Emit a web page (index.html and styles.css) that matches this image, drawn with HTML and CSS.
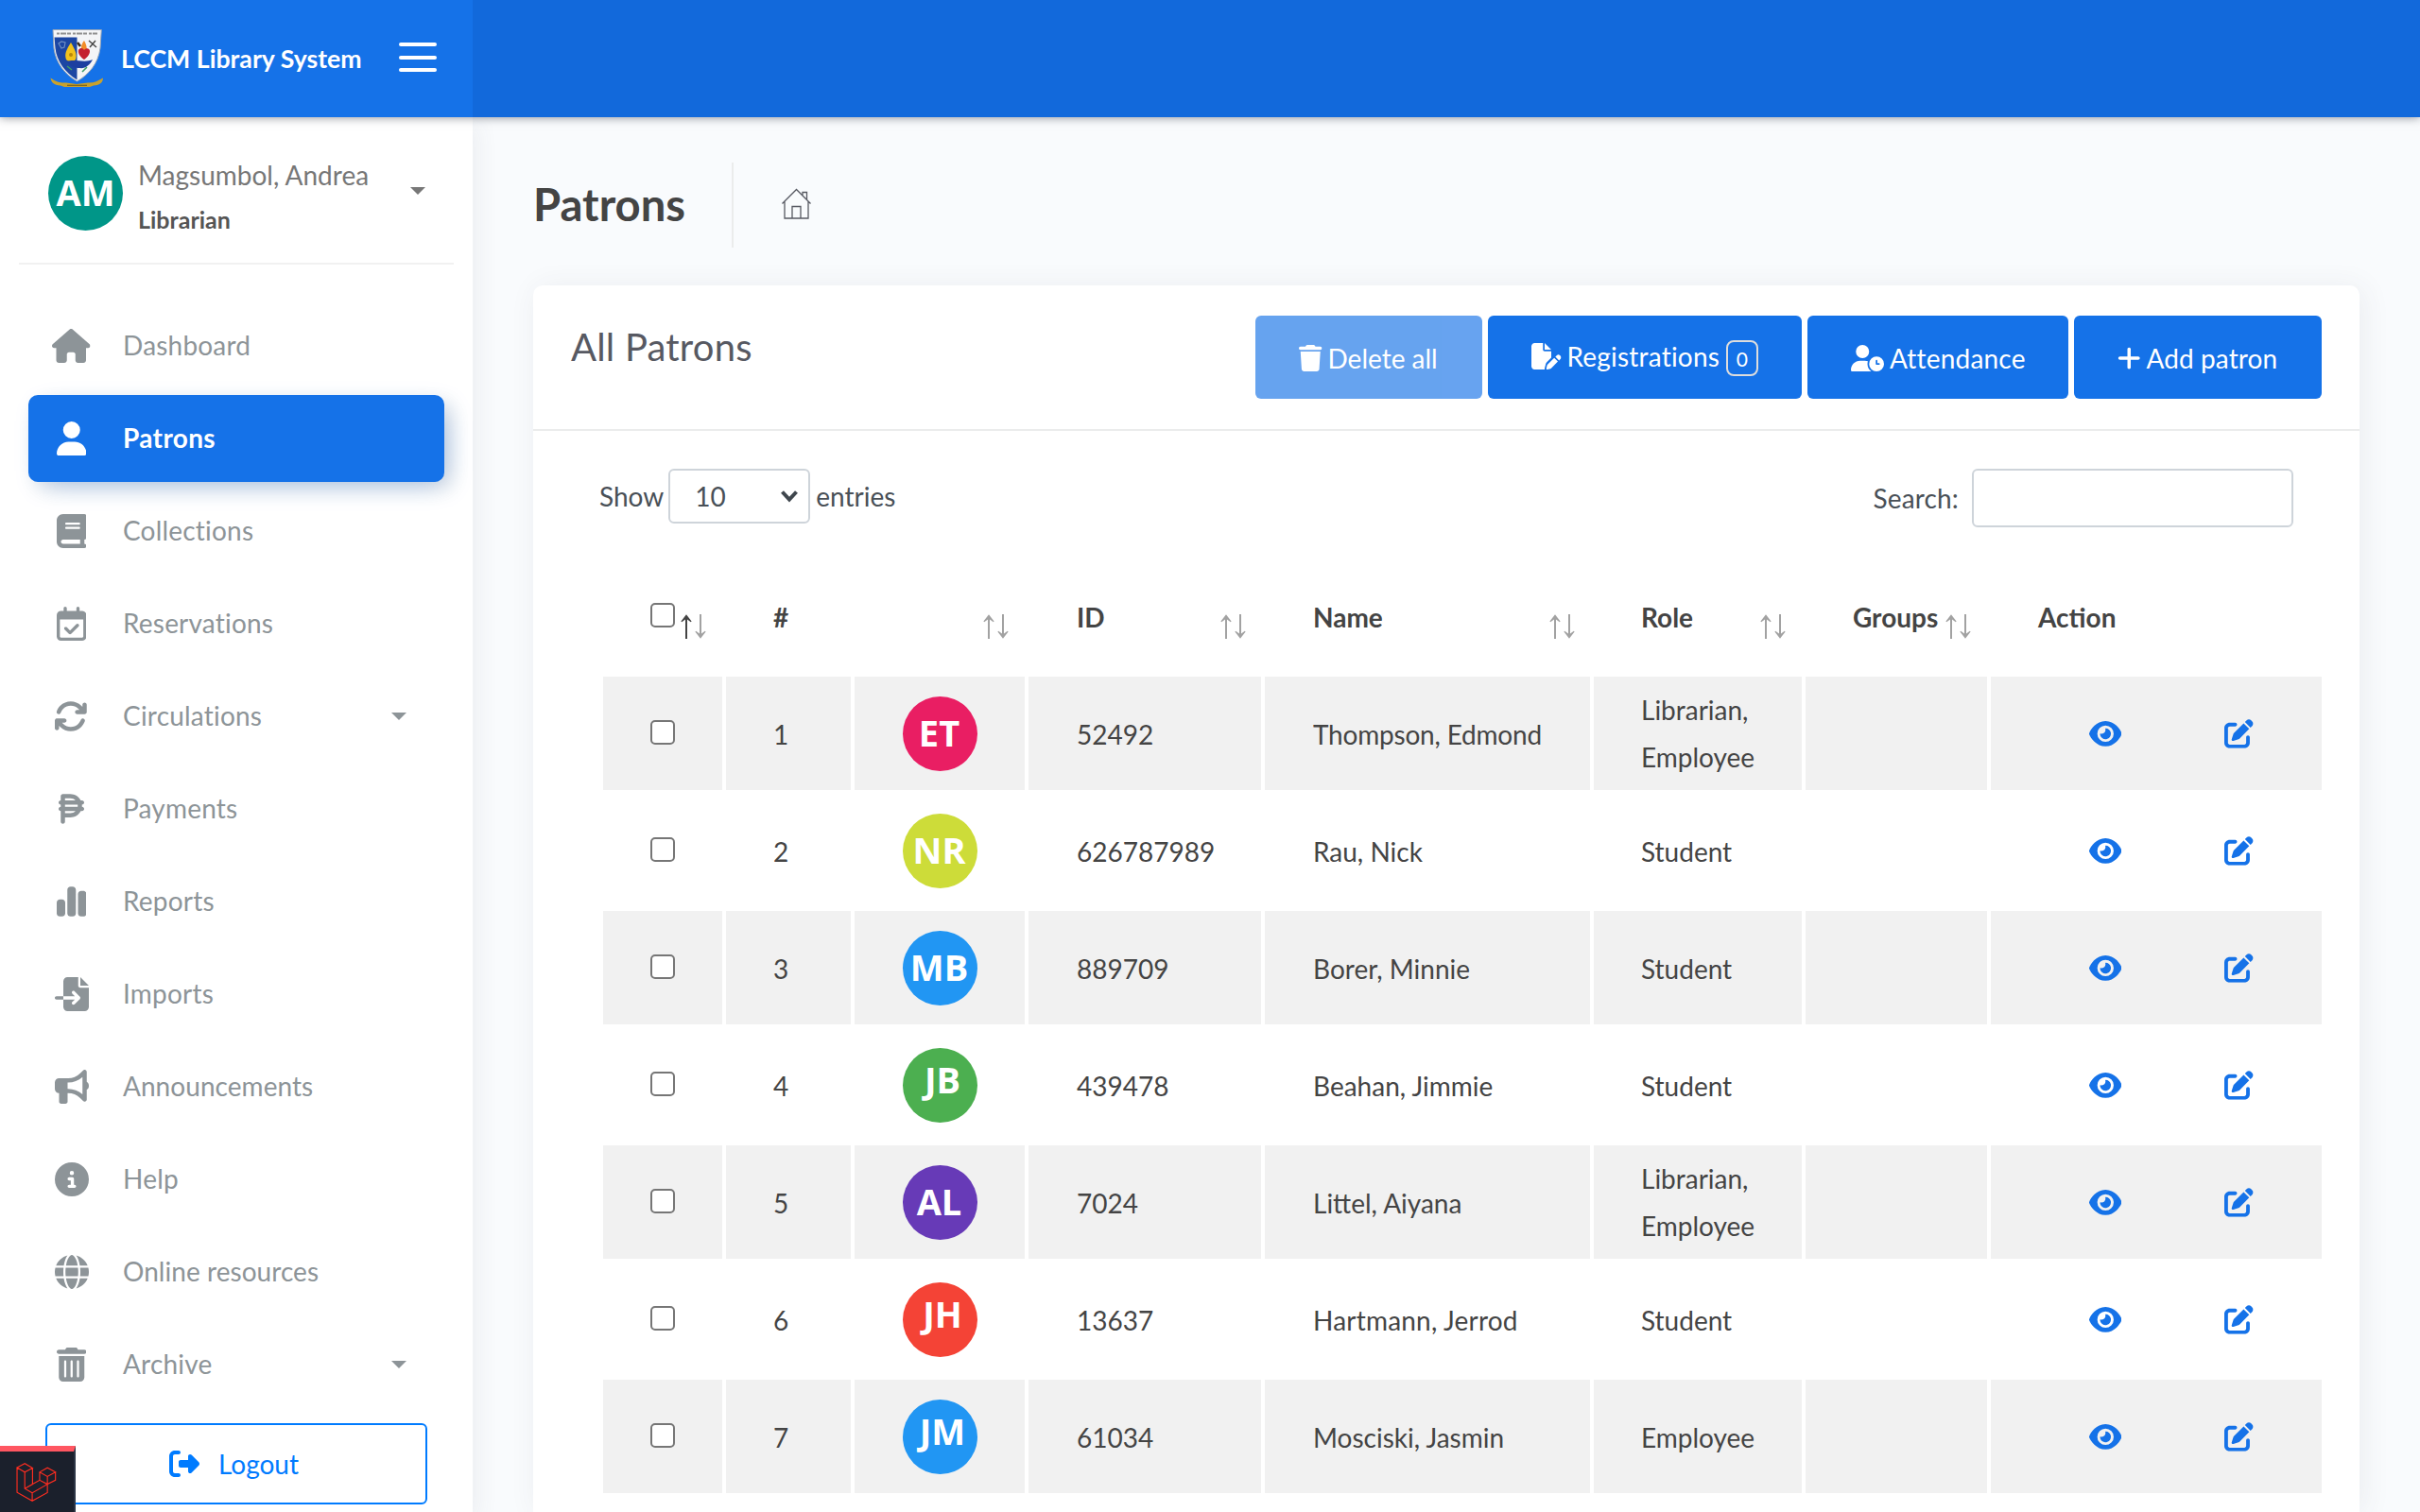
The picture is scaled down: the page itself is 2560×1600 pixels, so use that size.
FILE: index.html
```html
<!DOCTYPE html>
<html lang="en">
<head>
<meta charset="utf-8">
<title>Patrons - LCCM Library System</title>
<link rel="stylesheet" href="styles.css">
</head>
<body>
<svg class="sprite" aria-hidden="true">
  <symbol id="house" viewBox="0 0 576 512"><path d="M575.8 255.5c0 18-15 32.1-32 32.1h-32l.7 160.2c0 2.7-.2 5.4-.5 8.1V472c0 22.1-17.9 40-40 40H456c-1.1 0-2.2 0-3.3-.1c-1.4 .1-2.8 .1-4.2 .1H416 392c-22.1 0-40-17.9-40-40V448 384c0-17.7-14.3-32-32-32H256c-17.7 0-32 14.3-32 32v64 24c0 22.1-17.9 40-40 40H160 128.1c-1.5 0-3-.1-4.5-.2c-1.2 .1-2.4 .2-3.6 .2H104c-22.1 0-40-17.9-40-40V360c0-.9 0-1.9 .1-2.8V287.6H32c-18 0-32-14-32-32.1c0-9 3-17 10-24L266.4 8c7-7 15-8 22-8s15 2 21 7L564.8 231.5c8 7 12 15 11 24z"/></symbol>
  <symbol id="user" viewBox="0 0 448 512"><path d="M224 256A128 128 0 1 0 224 0a128 128 0 1 0 0 256zm-45.7 48C79.8 304 0 383.8 0 482.3C0 498.7 13.3 512 29.7 512H418.3c16.4 0 29.7-13.3 29.7-29.7C448 383.8 368.2 304 269.7 304H178.3z"/></symbol>
  <symbol id="book" viewBox="0 0 448 512"><path d="M96 0C43 0 0 43 0 96V416c0 53 43 96 96 96H384h32c17.7 0 32-14.3 32-32s-14.3-32-32-32V384c17.7 0 32-14.3 32-32V32c0-17.7-14.3-32-32-32H384 96zm0 384H352v64H96c-17.7 0-32-14.3-32-32s14.3-32 32-32zm32-240c0-8.8 7.2-16 16-16H336c8.8 0 16 7.2 16 16s-7.2 16-16 16H144c-8.8 0-16-7.2-16-16zm16 48H336c8.8 0 16 7.2 16 16s-7.2 16-16 16H144c-8.8 0-16-7.2-16-16s7.2-16 16-16z"/></symbol>
  <symbol id="calendar" viewBox="0 0 448 512"><path d="M128 0c13.3 0 24 10.7 24 24V64H296V24c0-13.3 10.7-24 24-24s24 10.7 24 24V64h40c35.3 0 64 28.7 64 64v16 48V448c0 35.3-28.7 64-64 64H64c-35.3 0-64-28.7-64-64V192 144 128C0 92.7 28.7 64 64 64h40V24c0-13.3 10.7-24 24-24zM400 192H48V448c0 8.8 7.2 16 16 16H384c8.8 0 16-7.2 16-16V192zM329 297L217 409c-9.4 9.4-24.6 9.4-33.9 0l-64-64c-9.4-9.4-9.4-24.6 0-33.9s24.6-9.4 33.9 0l47 47 95-95c9.4-9.4 24.6-9.4 33.9 0s9.4 24.6 0 33.9z"/></symbol>
  <symbol id="rotate" viewBox="16 0 512 512"><path d="M105.1 202.6c7.7-21.8 20.2-42.3 37.8-59.8c62.5-62.5 163.8-62.5 226.3 0L386.3 160H352c-17.7 0-32 14.3-32 32s14.3 32 32 32H463.5c0 0 0 0 0 0h.4c17.7 0 32-14.3 32-32V80c0-17.7-14.3-32-32-32s-32 14.3-32 32v35.2L414.4 97.6c-87.5-87.5-229.3-87.5-316.8 0C73.2 122 55.6 150.7 44.8 181.4c-5.9 16.7 2.9 34.9 19.5 40.8s34.9-2.9 40.8-19.5zM39 289.3c-5 1.5-9.8 4.2-13.7 8.2c-4 4-6.7 8.8-8.1 14c-.3 1.2-.6 2.5-.8 3.8c-.3 1.7-.4 3.4-.4 5.1V432c0 17.7 14.3 32 32 32s32-14.3 32-32V396.9l17.6 17.5 0 0c87.5 87.4 229.3 87.4 316.7 0c24.4-24.4 42.1-53.1 52.9-83.7c5.9-16.7-2.9-34.9-19.5-40.8s-34.9 2.9-40.8 19.5c-7.7 21.8-20.2 42.3-37.8 59.8c-62.5 62.5-163.8 62.5-226.3 0l-.1-.1L125.6 352H160c17.7 0 32-14.3 32-32s-14.3-32-32-32H48.4c-1.6 0-3.2 .1-4.8 .3s-3.1 .5-4.6 1z"/></symbol>
  <symbol id="peso" viewBox="0 0 384 512"><path d="M64 32C46.3 32 32 46.3 32 64v64c-17.7 0-32 14.3-32 32s14.3 32 32 32l0 32c-17.7 0-32 14.3-32 32s14.3 32 32 32l0 64v96c0 17.7 14.3 32 32 32s32-14.3 32-32V384h80c68.4 0 127.7-39 156.8-96H352c17.7 0 32-14.3 32-32s-14.3-32-32-32h-.7c.5-5.3 .7-10.6 .7-16s-.2-10.7-.7-16h.7c17.7 0 32-14.3 32-32s-14.3-32-32-32H332.8C303.7 71 244.4 32 176 32H64zm190.4 96H96V96h80c30.5 0 58.2 12.2 78.4 32zM96 192H286.9c.7 5.2 1.1 10.6 1.1 16s-.4 10.8-1.1 16H96V192zm158.4 96c-20.2 19.8-47.9 32-78.4 32H96V288H254.4z"/></symbol>
  <symbol id="chart" viewBox="0 0 448 512"><path d="M160 80c0-26.5 21.5-48 48-48h32c26.5 0 48 21.5 48 48V432c0 26.5-21.5 48-48 48H208c-26.5 0-48-21.5-48-48V80zM0 272c0-26.5 21.5-48 48-48H80c26.5 0 48 21.5 48 48V432c0 26.5-21.5 48-48 48H48c-26.5 0-48-21.5-48-48V272zM368 96h32c26.5 0 48 21.5 48 48V432c0 26.5-21.5 48-48 48H368c-26.5 0-48-21.5-48-48V144c0-26.5 21.5-48 48-48z"/></symbol>
  <symbol id="import" viewBox="0 0 512 512"><path d="M128 64c0-35.3 28.7-64 64-64H352V128c0 17.7 14.3 32 32 32H512V448c0 35.3-28.7 64-64 64H192c-35.3 0-64-28.7-64-64V336H302.1l-39 39c-9.4 9.4-9.4 24.6 0 33.9s24.6 9.4 33.9 0l80-80c9.4-9.4 9.4-24.6 0-33.9l-80-80c-9.4-9.4-24.6-9.4-33.9 0s-9.4 24.6 0 33.9l39 39H128V64zm0 224v48H24c-13.3 0-24-10.7-24-24s10.7-24 24-24H128zM512 128H384V0L512 128z"/></symbol>
  <symbol id="bullhorn" viewBox="0 0 512 512"><path d="M480 32c0-12.9-7.8-24.6-19.8-29.6s-25.7-2.2-34.9 6.9L381.7 53c-48 48-113.1 75-181 75H192 160 64c-35.3 0-64 28.7-64 64v96c0 35.3 28.7 64 64 64l0 128c0 17.7 14.3 32 32 32h64c17.7 0 32-14.3 32-32V352l8.7 0c67.9 0 133 27 181 75l43.6 43.6c9.2 9.2 22.9 11.9 34.9 6.9s19.8-16.6 19.8-29.6V300.4c18.6-8.8 32-32.5 32-60.4s-13.4-51.6-32-60.4V32zm-64 76.7V240 371.3C357.2 317.8 280.5 288 200.7 288H192V192h8.7c79.8 0 156.5-29.8 215.3-83.3z"/></symbol>
  <symbol id="info" viewBox="0 0 512 512"><path d="M256 512A256 256 0 1 0 256 0a256 256 0 1 0 0 512zM216 336h24V272H216c-13.3 0-24-10.7-24-24s10.7-24 24-24h48c13.3 0 24 10.7 24 24v88h8c13.3 0 24 10.7 24 24s-10.7 24-24 24H216c-13.3 0-24-10.7-24-24s10.7-24 24-24zm40-208a32 32 0 1 1 0 64 32 32 0 1 1 0-64z"/></symbol>
  <symbol id="globe" viewBox="0 0 512 512"><path d="M352 256c0 22.2-1.2 43.6-3.3 64H163.3c-2.2-20.4-3.3-41.8-3.3-64s1.2-43.6 3.3-64H348.7c2.2 20.4 3.3 41.8 3.3 64zm28.8-64H503.9c5.3 20.5 8.1 41.9 8.1 64s-2.8 43.5-8.1 64H380.8c2.1-20.6 3.2-42 3.2-64s-1.1-43.4-3.2-64zm112.6-32H376.7c-10-63.9-29.8-117.4-55.3-151.6c78.3 20.7 142 77.5 171.9 151.6zm-149.1 0H167.7c6.1-36.4 15.5-68.6 27-94.7c10.5-23.6 22.2-40.7 33.5-51.5C239.4 3.2 248.7 0 256 0s16.6 3.2 27.8 13.8c11.3 10.8 23 27.9 33.5 51.5c11.6 26 20.9 58.2 27 94.7zm-209 0H18.6C48.6 85.9 112.2 29.1 190.6 8.4C165.1 42.6 145.3 96.1 135.3 160zM8.1 192H131.2c-2.1 20.6-3.2 42-3.2 64s1.1 43.4 3.2 64H8.1C2.8 299.5 0 278.1 0 256s2.8-43.5 8.1-64zM194.7 446.6c-11.6-26-20.9-58.2-27-94.6H344.3c-6.1 36.4-15.5 68.6-27 94.6c-10.5 23.6-22.2 40.7-33.5 51.5C272.6 508.8 263.3 512 256 512s-16.6-3.2-27.8-13.8c-11.3-10.8-23-27.9-33.5-51.5zM135.3 352c10 63.9 29.8 117.4 55.3 151.6C112.2 482.9 48.6 426.1 18.6 352H135.3zm358.1 0c-30 74.1-93.6 130.9-171.9 151.6c25.5-34.2 45.2-87.7 55.3-151.6H493.4z"/></symbol>
  <symbol id="trash-can" viewBox="0 0 448 512"><path d="M135.2 17.7L128 32H32C14.3 32 0 46.3 0 64S14.3 96 32 96H416c17.7 0 32-14.3 32-32s-14.3-32-32-32H320l-7.2-14.3C307.4 6.8 296.3 0 284.2 0H163.8c-12.1 0-23.2 6.8-28.6 17.7zM416 128H32V448c0 35.3 28.7 64 64 64H352c35.3 0 64-28.7 64-64V128zM144 208V432c0 8.8-7.2 16-16 16s-16-7.2-16-16V208c0-8.8 7.2-16 16-16s16 7.2 16 16zm96 0V432c0 8.8-7.2 16-16 16s-16-7.2-16-16V208c0-8.8 7.2-16 16-16s16 7.2 16 16zm96 0V432c0 8.8-7.2 16-16 16s-16-7.2-16-16V208c0-8.8 7.2-16 16-16s16 7.2 16 16z"/></symbol>
  <symbol id="trash" viewBox="0 0 448 512"><path d="M135.2 17.7L128 32H32C14.3 32 0 46.3 0 64S14.3 96 32 96H416c17.7 0 32-14.3 32-32s-14.3-32-32-32H320l-7.2-14.3C307.4 6.8 296.3 0 284.2 0H163.8c-12.1 0-23.2 6.8-28.6 17.7zM416 128H32L53.2 467c1.6 25.3 22.6 45 47.9 45H346.9c25.3 0 46.3-19.7 47.9-45L416 128z"/></symbol>
  <symbol id="file-pen" viewBox="0 0 576 512"><path d="M0 64C0 28.7 28.7 0 64 0H224V128c0 17.7 14.3 32 32 32H384V285.7l-86.8 86.8c-10.3 10.3-17.5 23.1-21 37.2l-18.7 74.9c-2.3 9.2-1.8 18.8 1.3 27.5H64c-35.3 0-64-28.7-64-64V64zm384 64H256V0L384 128zM549.8 235.7l14.4 14.4c15.6 15.6 15.6 40.9 0 56.6l-29.4 29.4-71-71 29.4-29.4c15.6-15.6 40.9-15.6 56.6 0zM311.9 417L441.1 287.8l71 71L382.9 487.9c-4.1 4.1-9.2 7-14.9 8.4l-60.1 15c-5.5 1.4-11.2-.2-15.2-4.2s-5.6-9.7-4.2-15.2l15-60.1c1.4-5.6 4.3-10.8 8.4-14.9z"/></symbol>
  <symbol id="user-clock" viewBox="0 0 640 512"><path d="M224 0a128 128 0 1 1 0 256A128 128 0 1 1 224 0zM178.3 304h91.4c20.6 0 40.4 3.5 58.8 9.9C323 331 320 349.1 320 368c0 59.5 29.5 112.1 74.8 144H29.7C13.3 512 0 498.7 0 482.3C0 383.8 79.8 304 178.3 304zM352 368a144 144 0 1 1 288 0 144 144 0 1 1 -288 0zm144-80c-8.8 0-16 7.2-16 16v64c0 8.8 7.2 16 16 16h48c8.8 0 16-7.2 16-16s-7.2-16-16-16H512V304c0-8.8-7.2-16-16-16z"/></symbol>
  <symbol id="plus" viewBox="0 0 448 512"><path d="M256 80c0-17.7-14.3-32-32-32s-32 14.3-32 32V224H48c-17.7 0-32 14.3-32 32s14.3 32 32 32H192V432c0 17.7 14.3 32 32 32s32-14.3 32-32V288H400c17.7 0 32-14.3 32-32s-14.3-32-32-32H256V80z"/></symbol>
  <symbol id="eye" viewBox="0 0 576 512"><path d="M288 32c-80.8 0-145.5 36.8-192.6 80.6C48.6 156 17.3 208 2.5 243.7c-3.3 7.9-3.3 16.7 0 24.6C17.3 304 48.6 356 95.4 399.4C142.5 443.2 207.2 480 288 480s145.5-36.8 192.6-80.6c46.8-43.5 78.1-95.4 93-131.1c3.3-7.9 3.3-16.7 0-24.6c-14.9-35.7-46.2-87.7-93-131.1C433.5 68.8 368.8 32 288 32zM144 256a144 144 0 1 1 288 0 144 144 0 1 1 -288 0zm144-64c0 35.3-28.7 64-64 64c-7.1 0-13.9-1.2-20.3-3.3c-5.5-1.8-11.9 1.6-11.7 7.4c.3 6.9 1.3 13.8 3.2 20.7c13.7 51.2 66.4 81.6 117.6 67.9s81.6-66.4 67.9-117.6c-11.1-41.5-47.8-69.4-88.6-71.1c-5.8-.2-9.2 6.1-7.4 11.7c2.1 6.4 3.3 13.2 3.3 20.3z"/></symbol>
  <symbol id="edit" viewBox="0 0 512 512"><path d="M471.6 21.7c-21.9-21.9-57.3-21.9-79.2 0L362.3 51.7l97.9 97.9 30.1-30.1c21.9-21.9 21.9-57.3 0-79.2L471.6 21.7zm-299.2 220c-6.1 6.1-10.8 13.6-13.5 21.9l-29.6 88.8c-2.9 8.6-.6 18.1 5.8 24.6s15.9 8.7 24.6 5.8l88.8-29.6c8.2-2.7 15.7-7.4 21.9-13.5L437.7 172.3 339.7 74.3 172.4 241.7zM96 64C43 64 0 107 0 160V416c0 53 43 96 96 96H352c53 0 96-43 96-96V320c0-17.7-14.3-32-32-32s-32 14.3-32 32v96c0 17.7-14.3 32-32 32H96c-17.7 0-32-14.3-32-32V160c0-17.7 14.3-32 32-32h96c17.7 0 32-14.3 32-32s-14.3-32-32-32H96z"/></symbol>
  <symbol id="logout" viewBox="0 0 512 512"><path d="M377.9 105.9L500.7 228.7c7.2 7.2 11.3 17.1 11.3 27.3s-4.1 20.1-11.3 27.3L377.9 406.1c-6.4 6.4-15 9.9-24 9.9c-18.7 0-33.9-15.2-33.9-33.9l0-62.1-128 0c-17.7 0-32-14.3-32-32l0-64c0-17.7 14.3-32 32-32l128 0 0-62.1c0-18.7 15.2-33.9 33.9-33.9c9 0 17.6 3.6 24 9.9zM160 96L96 96c-17.7 0-32 14.3-32 32l0 256c0 17.7 14.3 32 32 32l64 0c17.7 0 32 14.3 32 32s-14.3 32-32 32l-64 0c-53 0-96-43-96-96L0 128C0 75 43 32 96 32l64 0c17.7 0 32 14.3 32 32s-14.3 32-32 32z"/></symbol>
  <symbol id="sort-up" viewBox="0 0 12 26"><path d="M6 0.3L11.6 7.4L10.8 8.2L7 5.6V26H5V5.6L1.2 8.2L.4 7.4Z"/></symbol>
  <symbol id="sort-down" viewBox="0 0 12 26"><path d="M6 25.7L11.6 18.6L10.8 17.8L7 20.4V0H5V20.4L1.2 17.8L.4 18.6Z"/></symbol>
</svg>

<header class="topbar">
  <div class="brand">
    <svg class="crest" viewBox="13 11 58 64">
      <path d="M16 12.500H67.300L66 32C64 48 54 60 41.500 67C29 60 19 48 17 32Z" fill="#f4f5f7" stroke="#9aa7b8" stroke-width="1"/>
      <path d="M17.500 20.500H41.500V65.500C29 58 20 46 18.500 32Z" fill="#1c46a3"/>
      <path d="M20 16.500H63" stroke="#8f8f8f" stroke-width="1.800" stroke-dasharray="3 1 6 1 4 2"/>
      <path d="M22 27l3-2 4 1-1 5-3 1z" fill="none" stroke="#6f8fc4" stroke-width="1.200"/>
      <path d="M35 26C30 34 28 38 30 44C33 47 37 47 40 44C42 38 39 33 35 26Z" fill="#f2c21d"/>
      <circle cx="35" cy="39" r="2" fill="#b8860b"/>
      <path d="M49 24C45 29 45 34 49 37C53 34 52 29 49 24Z" fill="#f28c28"/>
      <path d="M43 34C45 31 48 32 49 34C51 31 55 32 55 35C55 39 52 42 49 44C46 42 42 38 43 34Z" fill="#c4202f"/>
      <path d="M42 26l3 4" stroke="#3a2a1a" stroke-width="2.500"/>
      <path d="M54 24l8 7M61 24l-6 7" stroke="#444" stroke-width="1.400"/>
      <path d="M31 46C38 43 50 48 58 44C55 50 50 54 44 53C39 53 34 51 31 46Z" fill="#1d3fa0"/>
      <path d="M47 57l5-5M31 51l5 4" stroke="#3f9d6a" stroke-width="1.600"/>
      <path d="M13.500 63.500C20 68 24 69 30 68.500L41 70L53 68.500C59 69 63 67 69 63.500C69 68 66 71 59 71.500L55 73H28L24 71.500C17 71 14 68 13.500 63.500Z" fill="#c9a12c"/>
      <path d="M31 71.300H52" stroke="#7d6417" stroke-width="1.200"/>
    </svg>
    <span class="brand-name">LCCM Library System</span>
    <span class="burger"><i></i><i></i><i></i></span>
  </div>
</header>

<div class="shell">
  <aside class="sidebar">
    <div class="profile">
      <span class="avatar bg-teal">AM</span>
      <div class="who"><span class="who-name">Magsumbol, Andrea</span><span class="who-role">Librarian</span></div>
      <span class="caret"></span>
    </div>
    <nav class="nav">
      <a class="item"><span class="ico"><svg width="40.500"><use href="#house"/></svg></span><span class="label">Dashboard</span></a>
      <a class="item active"><span class="ico"><svg width="31.500"><use href="#user"/></svg></span><span class="label">Patrons</span></a>
      <a class="item"><span class="ico"><svg width="31.500"><use href="#book"/></svg></span><span class="label">Collections</span></a>
      <a class="item"><span class="ico"><svg width="31.500"><use href="#calendar"/></svg></span><span class="label">Reservations</span></a>
      <a class="item"><span class="ico"><svg width="36"><use href="#rotate"/></svg></span><span class="label">Circulations</span><span class="caret"></span></a>
      <a class="item"><span class="ico"><svg width="27"><use href="#peso"/></svg></span><span class="label">Payments</span></a>
      <a class="item"><span class="ico"><svg width="31.500"><use href="#chart"/></svg></span><span class="label">Reports</span></a>
      <a class="item"><span class="ico"><svg width="36"><use href="#import"/></svg></span><span class="label">Imports</span></a>
      <a class="item"><span class="ico"><svg width="36"><use href="#bullhorn"/></svg></span><span class="label tight">Announcements</span></a>
      <a class="item"><span class="ico"><svg width="36"><use href="#info"/></svg></span><span class="label">Help</span></a>
      <a class="item"><span class="ico"><svg width="36"><use href="#globe"/></svg></span><span class="label tight">Online resources</span></a>
      <a class="item"><span class="ico"><svg width="31.500"><use href="#trash-can"/></svg></span><span class="label">Archive</span><span class="caret"></span></a>
    </nav>
    <a class="logout"><svg width="32" height="32"><use href="#logout"/></svg>Logout</a>
  </aside>

  <main class="main">
    <div class="page-head">
      <h1>Patrons</h1>
      <span class="rule"></span>
      <svg class="home" viewBox="0 0 34 34" width="34" height="34"><path d="M1.500 16.500L16.500 1.500L31.500 16.500M4 14.500V32H29V14.500M12 32V19.500H21V32M23 7.500V4.500H27.500V12"/></svg>
    </div>

    <section class="card">
      <div class="card-head">
        <h2>All Patrons</h2>
        <div class="actions">
          <a class="btn b-delete"><svg width="24.500"><use href="#trash"/></svg>Delete all</a>
          <a class="btn b-reg"><svg width="31.500"><use href="#file-pen"/></svg>Registrations<span class="count">0</span></a>
          <a class="btn b-att"><svg width="35"><use href="#user-clock"/></svg>Attendance</a>
          <a class="btn b-add"><svg width="24.500"><use href="#plus"/></svg>Add patron</a>
        </div>
      </div>

      <div class="controls">
        <div class="length">Show
          <span class="select">10<svg width="20" height="14" viewBox="0 0 20 14"><path d="M2.500 2.500L10 10.500L17.500 2.500"/></svg></span>
          entries</div>
        <label class="search">Search:<input type="text"></label>
      </div>

      <table class="grid">
        <colgroup><col class="c1"><col class="c2"><col class="c3"><col class="c4"><col class="c5"><col class="c6"><col class="c7"><col class="c8"></colgroup>
        <thead>
          <tr>
            <th><div class="th check"><input type="checkbox"><span class="sort asc"><svg><use href="#sort-up"/></svg><svg><use href="#sort-down"/></svg></span></div></th>
            <th><div class="th">#</div></th>
            <th><div class="th"><span class="sort"><svg><use href="#sort-up"/></svg><svg><use href="#sort-down"/></svg></span></div></th>
            <th><div class="th nudge">ID<span class="sort"><svg><use href="#sort-up"/></svg><svg><use href="#sort-down"/></svg></span></div></th>
            <th><div class="th nudge">Name<span class="sort"><svg><use href="#sort-up"/></svg><svg><use href="#sort-down"/></svg></span></div></th>
            <th><div class="th">Role<span class="sort"><svg><use href="#sort-up"/></svg><svg><use href="#sort-down"/></svg></span></div></th>
            <th><div class="th">Groups<span class="sort"><svg><use href="#sort-up"/></svg><svg><use href="#sort-down"/></svg></span></div></th>
            <th><div class="th">Action</div></th>
          </tr>
        </thead>
        <tbody>
          <tr><td><input type="checkbox"></td><td>1</td><td class="pic"><span class="avatar bg-pink">ET</span></td><td class="txt">52492</td><td class="txt tight">Thompson, Edmond</td><td class="multi">Librarian,<br>Employee</td><td></td><td><div class="ops"><svg class="eye"><use href="#eye"/></svg><svg class="edit"><use href="#edit"/></svg></div></td></tr>
          <tr><td><input type="checkbox"></td><td>2</td><td class="pic"><span class="avatar bg-lime">NR</span></td><td class="txt">626787989</td><td class="txt">Rau, Nick</td><td>Student</td><td></td><td><div class="ops"><svg class="eye"><use href="#eye"/></svg><svg class="edit"><use href="#edit"/></svg></div></td></tr>
          <tr><td><input type="checkbox"></td><td>3</td><td class="pic"><span class="avatar bg-blue">MB</span></td><td class="txt">889709</td><td class="txt">Borer, Minnie</td><td>Student</td><td></td><td><div class="ops"><svg class="eye"><use href="#eye"/></svg><svg class="edit"><use href="#edit"/></svg></div></td></tr>
          <tr><td><input type="checkbox"></td><td>4</td><td class="pic"><span class="avatar deep bg-green">JB</span></td><td class="txt">439478</td><td class="txt">Beahan, Jimmie</td><td>Student</td><td></td><td><div class="ops"><svg class="eye"><use href="#eye"/></svg><svg class="edit"><use href="#edit"/></svg></div></td></tr>
          <tr><td><input type="checkbox"></td><td>5</td><td class="pic"><span class="avatar bg-purple">AL</span></td><td class="txt">7024</td><td class="txt">Littel, Aiyana</td><td class="multi">Librarian,<br>Employee</td><td></td><td><div class="ops"><svg class="eye"><use href="#eye"/></svg><svg class="edit"><use href="#edit"/></svg></div></td></tr>
          <tr><td><input type="checkbox"></td><td>6</td><td class="pic"><span class="avatar deep bg-red">JH</span></td><td class="txt">13637</td><td class="txt loose">Hartmann, Jerrod</td><td>Student</td><td></td><td><div class="ops"><svg class="eye"><use href="#eye"/></svg><svg class="edit"><use href="#edit"/></svg></div></td></tr>
          <tr><td><input type="checkbox"></td><td>7</td><td class="pic"><span class="avatar deep bg-blue">JM</span></td><td class="txt">61034</td><td class="txt">Mosciski, Jasmin</td><td>Employee</td><td></td><td><div class="ops"><svg class="eye"><use href="#eye"/></svg><svg class="edit"><use href="#edit"/></svg></div></td></tr>
        </tbody>
      </table>
    </section>
  </main>
</div>

<div class="debugbar"><svg viewBox="0 1218 238 192" width="78" height="64"><path d="M55 1268L80 1255L105 1270L80 1283ZV1348L104 1376L153 1349V1322L104 1350V1376M80 1283V1336L104 1350M105 1270V1322L80 1336M105 1322L128 1309L153 1322M128 1309V1283L153 1269L179 1283L153 1297L128 1283M153 1297V1322L179 1309V1283"/></svg></div>
</body>
</html>
```
FILE: styles.css
```css
* { box-sizing: border-box; }

body {
  margin: 0;
  height: 1600px;
  overflow: hidden;
  background: #f9fbfd;
  color: #444;
  font: 28px/50px Lato, "Liberation Sans", sans-serif;
}

h1, h2 { margin: 0; }
svg { fill: currentColor; flex: none; display: block; }
.sprite { display: none; }

/* Top bar */
.topbar {
  position: relative;
  z-index: 3;
  height: 124px;
  background: #1269db;
  box-shadow: 0 0 10px rgba(18, 23, 39, .5);
}
.brand {
  width: 500px;
  height: 124px;
  padding-left: 53px;
  display: flex;
  align-items: center;
  background: #1572e8;
}
.crest { width: 58px; height: 64px; }
.brand-name {
  width: 294px;
  margin-left: 17px;
  color: #fff;
  font-weight: 700;
  font-size: 26.7px;
  white-space: nowrap;
}
.burger { display: flex; flex-direction: column; gap: 9.500px; padding-bottom: 3px; }
.burger i { width: 40px; height: 4px; border-radius: 2px; background: #fff; }

.shell { display: flex; height: 1476px; }

/* Sidebar */
.sidebar {
  position: relative;
  z-index: 2;
  flex: none;
  width: 500px;
  background: #fff;
  box-shadow: 8px 8px 20px rgba(69, 65, 78, .06);
}
.profile {
  height: 156px;
  margin: 0 20px;
  padding: 40.500px 30px 0 31px;
  display: flex;
  border-bottom: 2px solid #f1f1f1;
}
.avatar {
  flex: none;
  display: inline-block;
  width: 79px;
  height: 79px;
  border-radius: 50%;
  color: #fff;
  font: 700 38px/77px "Open Sans", sans-serif;
  text-align: center;
}
/* initials starting with J hang below the baseline */
.avatar.deep { line-height: 67px; padding-left: 6px; }
.bg-teal { background: #009688; }
.bg-pink { background: #e91e63; }
.bg-lime { background: #cddc39; }
.bg-blue { background: #2196f3; }
.bg-green { background: #4caf50; }
.bg-purple { background: #673ab7; }
.bg-red { background: #f44336; }

.who { width: 289px; padding-left: 16px; display: flex; flex-direction: column; white-space: nowrap; }
.who-name { height: 43px; line-height: 40px; color: #777; }
.who-role { height: 46px; line-height: 48px; color: #555; font-size: 25px; font-weight: 700; }
.caret {
  width: 0;
  height: 0;
  border: 8px solid transparent;
  border-top-color: currentColor;
  border-bottom: 0;
}
.profile .caret { margin: 33.500px 0 0 15px; color: #777; }

.nav { padding: 40px 30px 0; display: flex; flex-direction: column; gap: 6px; }
.item {
  height: 92px;
  display: flex;
  align-items: center;
  border-radius: 10px;
  color: #8d9498;
}
.item svg { height: 36px; }
.ico { width: 90px; padding-left: 1px; display: flex; justify-content: center; }
.label { flex: 1; margin-left: 10px; padding-bottom: 2px; letter-spacing: .2px; }
.label.tight { letter-spacing: .05px; }
.item .caret { margin-right: 40px; }
.item.active {
  background: #1572e8;
  color: #fff;
  font-weight: 700;
  box-shadow: 8px 8px 20px rgba(0, 0, 0, .1), 8px 8px 30px -10px rgba(21, 114, 232, .4);
}
.item.active .label { letter-spacing: .35px; }
.logout {
  height: 86px;
  margin: 16px 48px 0;
  padding: 0 0 1px 129px;
  display: flex;
  align-items: center;
  gap: 20px;
  border: 2px solid #007bff;
  border-radius: 6px;
  color: #007bff;
}

/* Page header */
.main {
  flex: 1;
  display: flex;
  flex-direction: column;
  padding: 48px 64px 0;
}
.page-head { height: 90px; display: flex; align-items: center; }
.page-head h1 { width: 210px; padding-bottom: 2px; font-size: 47.200px; line-height: 60px; }
.rule { width: 2px; height: 90px; background: #ebecec; }
.home { margin: -2px 0 0 50px; fill: none; stroke: #575962; stroke-width: 1.300; }

/* Card */
.card {
  flex: 1;
  margin-top: 40px;
  border-radius: 10px 10px 0 0;
  background: #fff;
  box-shadow: 4px 2px 30px rgba(69, 65, 78, .08);
}
.card-head {
  height: 154px;
  padding: 32px 40px 0;
  display: flex;
  justify-content: space-between;
  border-bottom: 2px solid #ebecec;
}
.card-head h2 { font-size: 40px; line-height: 66px; font-weight: 400; color: #575962; letter-spacing: .2px; }
.actions { display: flex; gap: 6px; }
.btn {
  height: 88px;
  padding: 1px 46px 0;
  display: flex;
  align-items: center;
  gap: 6px;
  border-radius: 6px;
  background: #1572e8;
  color: #fff;
  letter-spacing: .2px;
  white-space: nowrap;
}
.btn svg { height: 28px; }
.b-delete { width: 240px; opacity: .65; letter-spacing: 0; }
.b-reg { width: 332px; padding: 0 46px 3px; }
.b-att { width: 276px; }
.b-add { width: 262px; letter-spacing: .1px; }
.count {
  width: 34px;
  height: 38px;
  margin-left: 1px;
  border: 2px solid #ddd;
  border-radius: 8px;
  font-size: 21px;
  line-height: 36px;
  text-align: center;
  position: relative;
  top: 2px;
}

.controls {
  height: 134px;
  padding: 40px 70px 0;
  display: flex;
  justify-content: space-between;
  color: #495057;
}
.length { display: flex; align-items: center; height: 58px; gap: 5px; }
.select {
  width: 150px;
  height: 58px;
  margin-right: 1px;
  padding: 0 10px 0 26px;
  display: flex;
  align-items: center;
  justify-content: space-between;
  border: 2px solid #ced4da;
  border-radius: 6px;
}
.select svg { fill: none; stroke: #3f464d; stroke-width: 4; }
.search { display: flex; align-items: center; height: 62px; gap: 14px; letter-spacing: .15px; }
.search input {
  width: 340px;
  height: 62px;
  border: 2px solid #ced4da;
  border-radius: 6px;
  background: #fff;
}

/* Table */
.grid {
  width: 1826px;
  margin-left: 70px;
  table-layout: fixed;
  border-collapse: separate;
  border-spacing: 4px;
}
.c1 { width: 126px; }
.c2 { width: 132px; }
.c3 { width: 180px; }
.c4 { width: 246px; }
.c5 { width: 344px; }
.c6 { width: 220px; }
.c7 { width: 192px; }
.c8 { width: 350px; }
.grid th { height: 118px; padding: 0 0 0 50px; text-align: left; }
.grid td { height: 120px; padding: 2px 0 0 50px; white-space: nowrap; }
.grid tbody tr:nth-child(odd) td { background: #f1f1f1; }
.grid td.txt { padding-left: 51px; }
.grid td.tight { letter-spacing: -.2px; }
.grid td.loose { letter-spacing: .2px; }
.grid td.multi { padding: 0 0 1px 50px; }
.grid td.pic { padding-left: 51px; padding-top: 0; }
.pic .avatar { display: block; padding-right: 2px; }
.pic .avatar.deep { padding-right: 1px; }
.th { display: flex; align-items: center; justify-content: space-between; height: 50px; padding-right: 17px; }
.th.nudge { padding: 0 16px 0 1px; }
.sort { display: flex; gap: 3px; margin: 20px 0 0 auto; color: #a2a2a2; }
.sort svg { width: 12px; height: 26px; }
.sort.asc svg:first-child { color: #444; }

input[type="checkbox"] {
  appearance: none;
  display: block;
  flex: none;
  width: 26px;
  height: 26px;
  margin: 0 0 4px;
  border: 2px solid #767676;
  border-radius: 5px;
  background: #fff;
}
.ops { display: flex; align-items: center; padding: 0 0 1px 53.500px; color: #1572e8; }
.eye { width: 34.600px; height: 30.800px; }
.edit { width: 30.800px; height: 30.800px; margin-left: 109px; }

/* Debug toolbar toggle pinned over the page corner */
.debugbar {
  position: absolute;
  z-index: 5;
  left: 0;
  bottom: 0;
  width: 80px;
  height: 70px;
  border-top: 6px solid #ff5661;
  border-right: 2px solid #2c3545;
  background: #1b202c;
}
.debugbar svg { fill: none; stroke: #ff2d20; stroke-width: 3.500; }
```
